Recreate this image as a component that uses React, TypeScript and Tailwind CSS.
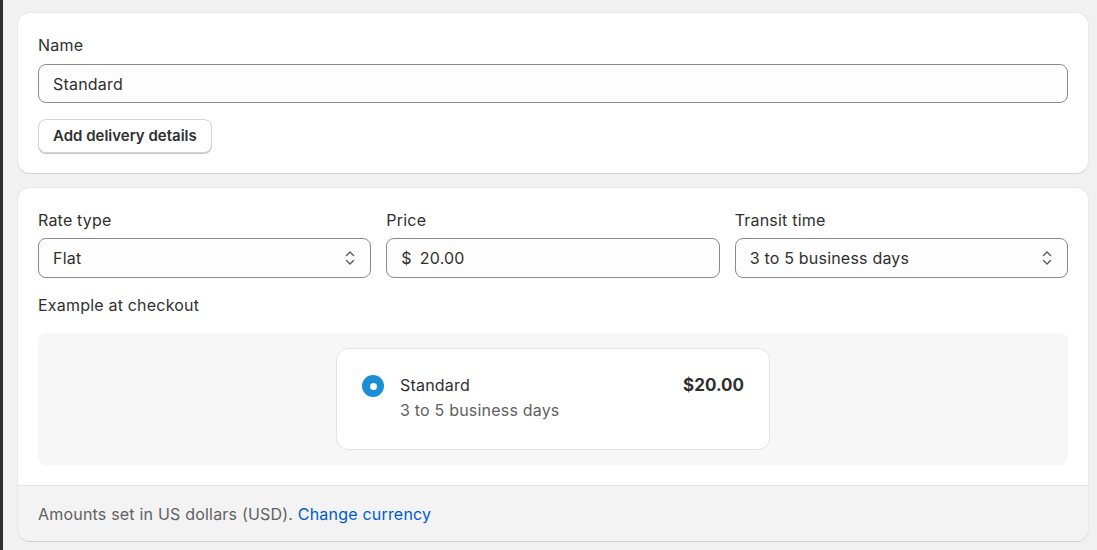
import { useState } from "react";

const Chevrons = () => (
  <svg width="14" height="20" viewBox="0 0 14 20" fill="none" className="text-[#5a5a5a]">
    <path d="M3.5 7.5 7 4l3.5 3.5" stroke="currentColor" strokeWidth="1.4" strokeLinecap="round" strokeLinejoin="round" />
    <path d="M3.5 12.5 7 16l3.5-3.5" stroke="currentColor" strokeWidth="1.4" strokeLinecap="round" strokeLinejoin="round" />
  </svg>
);

const SelectBox = ({ value }: { value: string }) => (
  <div className="h-10 flex items-center justify-between pl-[14px] pr-[13px] rounded-lg border border-[#8a8a8a] bg-[#fdfdfd]">
    <span>{value}</span>
    <Chevrons />
  </div>
);

const Field = ({ label, children }: { label: string; children: React.ReactNode }) => (
  <div className="flex flex-col gap-[6px]">
    <span>{label}</span>
    {children}
  </div>
);

const App = () => {
  const [name, setName] = useState("Standard");
  const [price, setPrice] = useState("20.00");

  return (
    <div className="min-h-[550px] w-full flex bg-[#f1f1f1] text-base leading-6 tracking-[0.2px] text-[#303030] font-['Inter','Liberation_Sans',sans-serif]">
      <div className="w-[3px] bg-[#2f2f2f] shrink-0" />
      <div className="flex-1 flex flex-col gap-[15px] pl-[15px] pr-[9px] pt-[13px]">
        <div className="bg-white rounded-xl shadow-[0_1px_0_0_#d4d4d4,0_0_0_1px_#e8e8e8] p-5">
          <div className="flex flex-col gap-[7px]">
            <span>Name</span>
            <input
              value={name}
              onChange={(e) => setName(e.target.value)}
              className="h-[39px] px-[14px] rounded-lg border border-[#8a8a8a] bg-[#fdfdfd] outline-none"
            />
          </div>
          <button className="mt-4 h-[34px] px-[14px] rounded-lg border border-[#d4d4d4] bg-white text-[15px] tracking-normal font-semibold shadow-[0_1px_0_0_#c8c8c8]">
            Add delivery details
          </button>
        </div>

        <div className="bg-white rounded-xl shadow-[0_1px_0_0_#d0d0d0,0_0_0_1px_#e8e8e8] overflow-hidden">
          <div className="px-5 pt-5 pb-[20px]">
            <div className="grid grid-cols-3 gap-[15px]">
              <Field label="Rate type">
                <SelectBox value="Flat" />
              </Field>
              <Field label="Price">
                <div className="h-10 flex items-center px-[14px] rounded-lg border border-[#8a8a8a] bg-[#fdfdfd]">
                  <span className="mr-2">$</span>
                  <input
                    value={price}
                    onChange={(e) => setPrice(e.target.value)}
                    className="flex-1 bg-transparent outline-none"
                  />
                </div>
              </Field>
              <Field label="Transit time">
                <SelectBox value="3 to 5 business days" />
              </Field>
            </div>

            <div className="mt-[15px]">Example at checkout</div>

            <div className="mt-4 rounded-lg bg-[#f7f7f7] h-[132px] flex justify-center pt-[15px]">
              <div className="w-[434px] h-[102px] bg-white rounded-xl border border-[#e3e3e3] flex items-start pl-[25px] pr-[25px] pt-[24px]">
                <span className="w-[22px] h-[22px] rounded-full bg-[#1a8ed8] flex items-center justify-center shrink-0 mt-[2px]">
                  <span className="w-[7px] h-[7px] rounded-full bg-white" />
                </span>
                <div className="ml-4 flex-1 flex flex-col gap-px">
                  <span>Standard</span>
                  <span className="text-[#616161]">3 to 5 business days</span>
                </div>
                <span className="font-bold text-[17px] tracking-normal">$20.00</span>
              </div>
            </div>
          </div>

          <div className="bg-[#f3f3f3] border-t border-[#e3e3e3] h-[56px] flex items-center px-5 text-[#616161]">
            <span>
              Amounts set in US dollars (USD).{" "}
              <a className="text-[#005bd3] cursor-pointer">Change currency</a>
            </span>
          </div>
        </div>
      </div>
    </div>
  );
};

export default App;
